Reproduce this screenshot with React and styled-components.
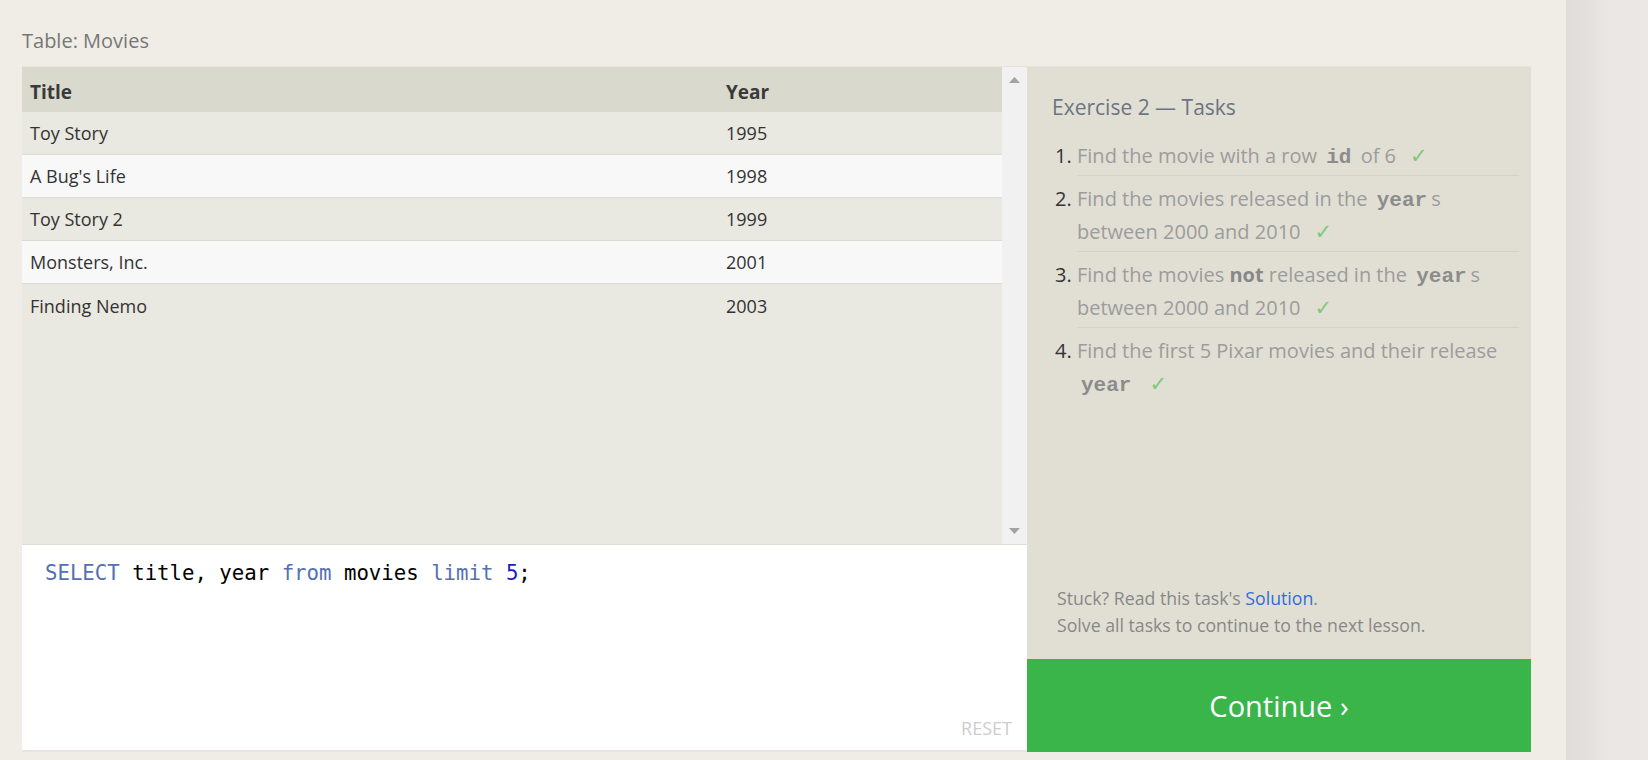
import React from 'react';
import styled, { createGlobalStyle } from 'styled-components';

const GlobalStyle = createGlobalStyle`
  html, body {
    margin: 0;
    padding: 0;
  }
  body {
    background: #f0ede6;
    font-family: "Open Sans", "Liberation Sans", sans-serif;
  }
  * {
    box-sizing: border-box;
  }
`;

const movies = [
  { title: 'Toy Story', year: 1995 },
  { title: "A Bug's Life", year: 1998 },
  { title: 'Toy Story 2', year: 1999 },
  { title: 'Monsters, Inc.', year: 2001 },
  { title: 'Finding Nemo', year: 2003 },
];

export default function App() {
  return (
    <Page>
      <GlobalStyle />
      <Main>
        <TableLabel>Table: Movies</TableLabel>
        <Workspace>
          <LeftColumn>
            <ResultsArea>
              <ResultsTable>
                <HeaderRow>
                  <Cell>Title</Cell>
                  <Cell>Year</Cell>
                </HeaderRow>
                {movies.map((m, i) => (
                  <Row key={m.title} $even={i % 2 === 1}>
                    <Cell>{m.title}</Cell>
                    <Cell>{m.year}</Cell>
                  </Row>
                ))}
              </ResultsTable>
              <Scrollbar>
                <svg width="11" height="6" viewBox="0 0 11 6">
                  <polygon points="0,6 5.5,0 11,6" fill="#a3a3a3" />
                </svg>
                <svg width="11" height="6" viewBox="0 0 11 6">
                  <polygon points="0,0 11,0 5.5,6" fill="#a3a3a3" />
                </svg>
              </Scrollbar>
            </ResultsArea>
            <Editor>
              <Code>
                <Token $kind="keyword">SELECT</Token> title, year <Token $kind="keyword">from</Token> movies{' '}
                <Token $kind="keyword">limit</Token> <Token $kind="number">5</Token>;
              </Code>
              <ResetButton>Reset</ResetButton>
            </Editor>
          </LeftColumn>

          <TaskPanel>
            <Tasks>
              <TasksTitle>Exercise 2 — Tasks</TasksTitle>
              <TaskList>
                <TaskItem>
                  Find the movie with a row <InlineCode>id</InlineCode> of 6<Check>✓</Check>
                </TaskItem>
                <TaskItem>
                  Find the movies released in the <InlineCode>year</InlineCode>s between 2000 and 2010
                  <Check>✓</Check>
                </TaskItem>
                <TaskItem>
                  Find the movies <strong>not</strong> released in the <InlineCode>year</InlineCode>s between 2000
                  and 2010<Check>✓</Check>
                </TaskItem>
                <TaskItem>
                  Find the first 5 Pixar movies and their release <InlineCode>year</InlineCode>
                  <Check>✓</Check>
                </TaskItem>
              </TaskList>
            </Tasks>
            <Footnote>
              Stuck? Read this task's <a href="#solution">Solution</a>.
              <br />
              Solve all tasks to continue to the next lesson.
            </Footnote>
            <ContinueButton>Continue ›</ContinueButton>
          </TaskPanel>
        </Workspace>
      </Main>
      <Aside />
    </Page>
  );
}

const Page = styled.div`
  display: grid;
  grid-template-columns: 1566px 1fr;
  min-height: 760px;
`;

const Main = styled.main`
  padding: 27px 0 0 22px;
`;

const Aside = styled.aside`
  background: linear-gradient(to right, #dfdcda 0, #e3e0dd 22px, #eae6e3 40px, #ece8e5 100%);
`;

const TableLabel = styled.div`
  font-size: 20px;
  line-height: 27px;
  color: #777;
  margin-bottom: 12px;
`;

const Workspace = styled.div`
  display: grid;
  grid-template-columns: 1005px 504px;
  width: 1509px;
  height: 686px;
  border-top: 1px solid #e6e4dc;
`;

const LeftColumn = styled.div`
  display: flex;
  flex-direction: column;
  min-height: 0;
`;

const ResultsArea = styled.div`
  display: flex;
  height: 478px;
  border-bottom: 1px solid #dedcd4;
`;

const ResultsTable = styled.div`
  flex: 1;
  background: #e9e8e1;
  font-size: 18px;
  color: #333;
`;

const HeaderRow = styled.div`
  display: grid;
  grid-template-columns: 696px 1fr;
  height: 45px;
  padding-top: 5px;
  background: #dad9cd;
  font-size: 19px;
  font-weight: 700;
  color: #3a3a3a;
`;

const Row = styled.div`
  display: grid;
  grid-template-columns: 696px 1fr;
  height: 43px;
  background: ${(p) => (p.$even ? '#f8f8f8' : '#e9e8e1')};
  border-bottom: 1px solid #dcdbd6;

  &:last-child {
    border-bottom: none;
  }
`;

const Cell = styled.div`
  display: flex;
  align-items: center;
  padding: 0 8px;
`;

const Scrollbar = styled.div`
  width: 25px;
  background: #f1f1f1;
  display: flex;
  flex-direction: column;
  align-items: center;
  justify-content: space-between;
  padding: 10px 0 10px;

  & svg {
    display: block;
  }
`;

const Editor = styled.div`
  flex: 1;
  display: flex;
  flex-direction: column;
  background: #fff;
  border-bottom: 2px solid #e7e5de;
  padding: 16px 15px 10px 23px;
`;

const Code = styled.div`
  font-family: "DejaVu Sans Mono", "Liberation Mono", monospace;
  font-size: 20.7px;
  color: #000;
  white-space: pre;
`;

const Token = styled.span`
  color: ${(p) => (p.$kind === 'number' ? '#1a1acc' : '#5470b4')};
`;

const ResetButton = styled.button`
  margin-top: auto;
  align-self: flex-end;
  background: none;
  border: 0;
  padding: 0;
  font-family: "Open Sans", "Liberation Sans", sans-serif;
  font-size: 18px;
  color: #cdcdcd;
  text-transform: uppercase;
  cursor: pointer;
`;

const TaskPanel = styled.section`
  display: flex;
  flex-direction: column;
  background: #e1dfd4;
`;

const Tasks = styled.div`
  flex: 1;
  padding: 27px 12px 0 25px;
`;

const TasksTitle = styled.h2`
  margin: 0 0 12px;
  font-size: 21px;
  font-weight: 400;
  line-height: 27px;
  color: #6b7482;
`;

const TaskList = styled.ol`
  margin: 0;
  padding-left: 25px;
  font-size: 20px;
  line-height: 33px;
  color: #9c9c9c;

  & strong {
    color: #888;
  }
`;

const TaskItem = styled.li`
  padding: 6px 0 3px;
  border-bottom: 1px solid #d4d2c7;

  &:last-child {
    border-bottom: none;
  }
  &::marker {
    color: #333;
  }
`;

const InlineCode = styled.code`
  font-family: "Liberation Mono", "DejaVu Sans Mono", monospace;
  font-weight: 700;
  font-size: 21px;
  line-height: 1;
  color: #8c8c8c;
  padding: 0 4px;
`;

const Check = styled.span`
  margin-left: 14px;
  font-family: "DejaVu Sans", sans-serif;
  font-size: 21px;
  line-height: 1;
  color: #7cc97c;
`;

const Footnote = styled.p`
  margin: 0;
  padding: 0 12px 20px 30px;
  font-size: 17.7px;
  line-height: 27px;
  color: #888;

  & a {
    color: #2f6ddc;
    text-decoration: none;
  }
`;

const ContinueButton = styled.button`
  height: 93px;
  width: 100%;
  border: 0;
  background: #3ab54a;
  color: #fff;
  font-family: "Open Sans", "Liberation Sans", sans-serif;
  font-size: 29px;
  cursor: pointer;
`;
